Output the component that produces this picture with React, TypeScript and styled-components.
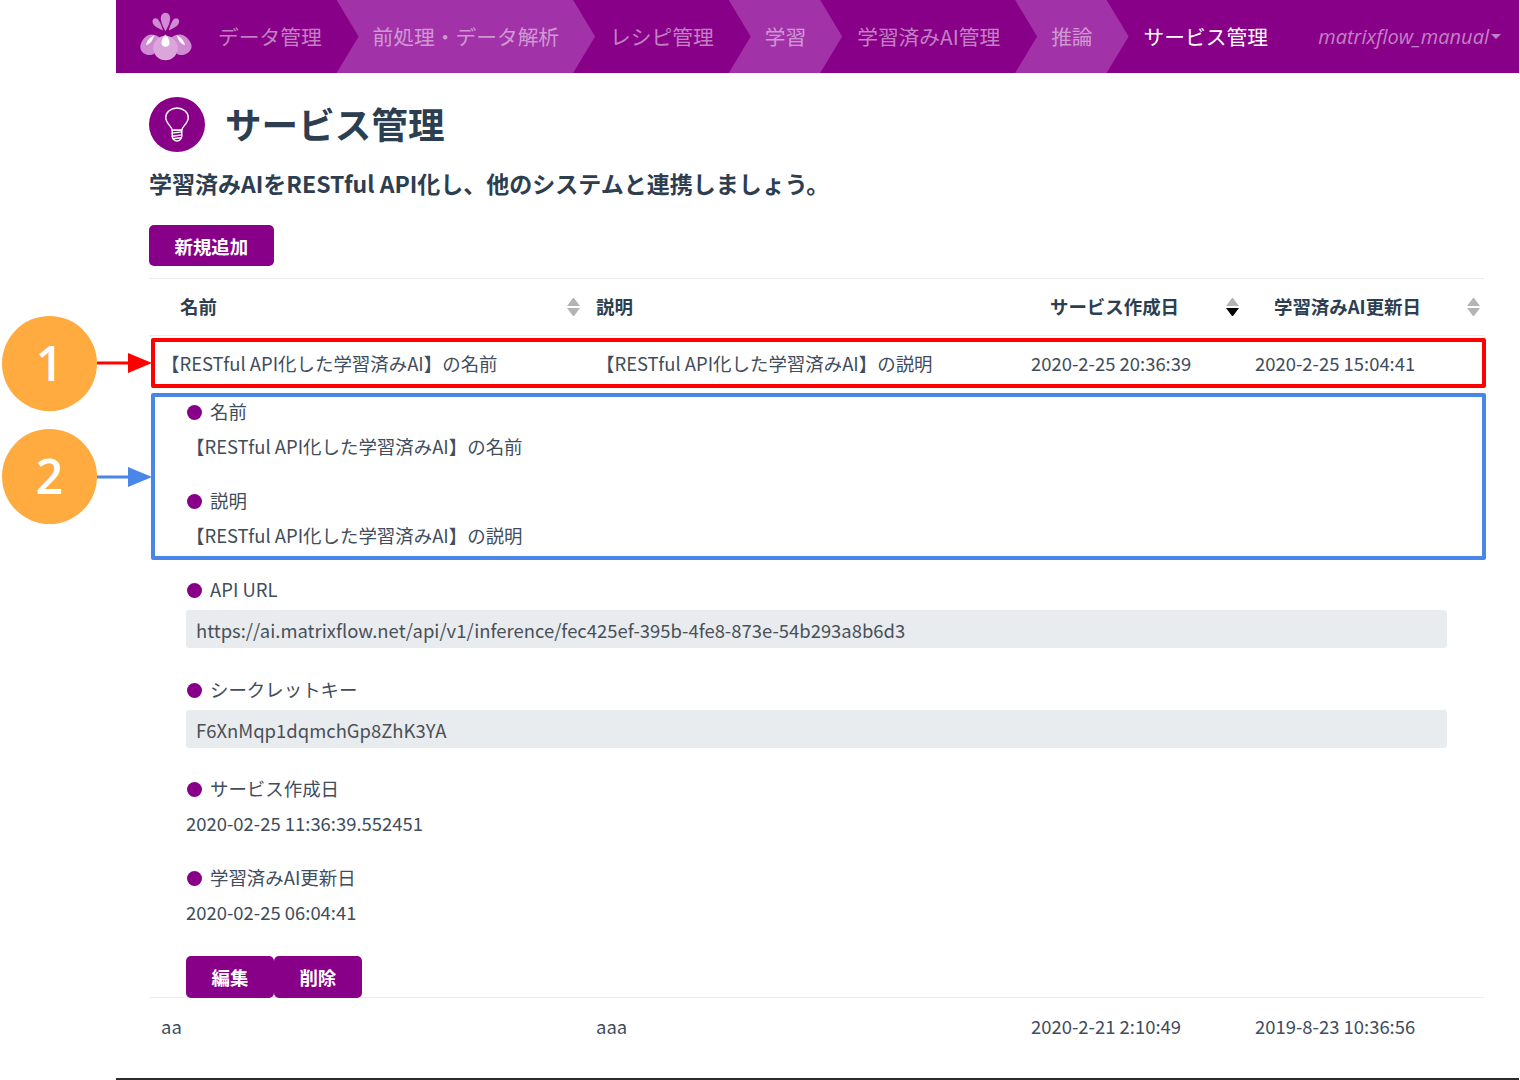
import styled, { createGlobalStyle } from "styled-components";

const GlobalStyle = createGlobalStyle`
  html, body {
    margin: 0;
    padding: 0;
    background: #fff;
  }
  body {
    font-family: "Noto Sans CJK JP", "Noto Sans", sans-serif;
    font-size: 18.45px;
    line-height: 27px;
    color: #3f4d5c;
  }
  * {
    box-sizing: border-box;
  }
`;

const PURPLE = "#880088";
const COLUMNS = "435px 435px 224px 241px";

const Page = styled.div`
  position: relative;
  width: 1520px;
  height: 1080px;
  overflow: hidden;
  padding: 0 1px 0 116px;
`;

const Main = styled.main`
  height: 1080px;
  border-bottom: 2px solid #2b2b2b;
`;

const Header = styled.header`
  display: flex;
  align-items: center;
  height: 73px;
  padding-left: 21px;
  background: ${PURPLE};
`;

const Brand = styled.svg`
  width: 57px;
  height: 53px;
  margin-right: 9px;
  flex: none;
`;

const NavItem = styled.a<{ $band?: boolean; $active?: boolean }>`
  display: flex;
  align-items: center;
  height: 73px;
  margin-left: -21px;
  padding: 0 36px;
  font-size: 20.72px;
  white-space: nowrap;
  color: ${(p) => (p.$active ? "#fff" : "rgba(255, 255, 255, 0.5)")};
  background: ${(p) => (p.$band ? "#a232a8" : "transparent")};
  clip-path: polygon(0 0, calc(100% - 22px) 0, 100% 50%, calc(100% - 22px) 100%, 0 100%, 22px 50%);
`;

const UserMenu = styled.div`
  display: flex;
  align-items: center;
  margin-left: auto;
  padding-right: 18px;
  font-family: "Open Sans", sans-serif;
  font-size: 20px;
  font-style: italic;
  color: rgba(255, 255, 255, 0.5);

  &::after {
    content: "";
    margin-left: 2px;
    border-top: 5px solid rgba(255, 255, 255, 0.5);
    border-left: 5px solid transparent;
    border-right: 5px solid transparent;
  }
`;

const Content = styled.div`
  padding: 24px 35px 0 33px;
`;

const TitleRow = styled.div`
  display: flex;
  align-items: center;
  gap: 21px;
  height: 55px;
`;

const TitleIcon = styled.div`
  display: flex;
  align-items: center;
  justify-content: center;
  width: 56px;
  height: 55px;
  border-radius: 50%;
  background: ${PURPLE};
`;

const Title = styled.h1`
  margin: 0 0 2px -1px;
  font-size: 36.6px;
  font-weight: 700;
  line-height: 53px;
  color: #2c3e50;
`;

const Lead = styled.p`
  margin: 14px 0 25px;
  font-size: 23px;
  font-weight: 700;
  line-height: 34px;
  color: #2c3e50;
`;

const Button = styled.button`
  height: 42px;
  padding: 1px 25.5px 0;
  border: 0;
  border-radius: 5px;
  font: inherit;
  font-weight: 700;
  color: #fff;
  background: ${PURPLE};
`;

const AddButton = styled(Button)`
  display: block;
  height: 41px;
  margin-bottom: 12px;
`;

const HeadRow = styled.div`
  display: grid;
  grid-template-columns: ${COLUMNS};
  height: 58px;
  padding-bottom: 1px;
  border-top: 1px solid #ececec;
  border-bottom: 1px solid #ececec;
`;

const HeadCell = styled.div<{ $plain?: boolean }>`
  display: flex;
  align-items: center;
  justify-content: space-between;
  padding: 0 4px 0 ${(p) => (p.$plain ? "12px" : "31px")};
  font-weight: 700;
  color: #2c3e50;
`;

const SortIcon = styled.span<{ $down?: boolean }>`
  display: flex;
  flex-direction: column;
  gap: 2px;
  width: 13px;

  &::before,
  &::after {
    content: "";
    border-left: 6.5px solid transparent;
    border-right: 6.5px solid transparent;
  }
  &::before {
    border-bottom: 8px solid #b4b4b4;
  }
  &::after {
    border-top: 8px solid ${(p) => (p.$down ? "#000" : "#b4b4b4")};
  }
`;

const DataRow = styled.div`
  display: grid;
  grid-template-columns: ${COLUMNS};
  align-items: center;
  height: 56px;
  padding-bottom: 2px;
`;

const LastRow = styled(DataRow)`
  height: 60px;
  border-top: 1px solid #ececec;
  margin-top: -1px;
`;

const Cell = styled.div`
  padding-left: 12px;
`;

const Detail = styled.section`
  padding: 6px 37px 0;
`;

const Field = styled.div`
  margin-bottom: 27px;
`;

const Label = styled.div`
  display: flex;
  align-items: center;
  gap: 8px;
  margin-bottom: 8px;

  &::before {
    content: "";
    width: 15px;
    height: 15px;
    margin: 1px 0 0 1px;
    border-radius: 50%;
    background: ${PURPLE};
  }
`;

const ReadOnlyValue = styled.div<{ $after: number }>`
  height: 38px;
  margin: -1px 0 ${(p) => p.$after}px;
  padding: 0 10px;
  line-height: 40px;
  border-radius: 3px;
  color: #495057;
  background: #e9ecef;
`;

const Actions = styled.div`
  position: relative;
  display: flex;
  margin-top: 30px;
`;

const Circle = styled.div<{ $top: number }>`
  position: absolute;
  left: 2px;
  top: ${(p) => p.$top}px;
  display: flex;
  align-items: center;
  justify-content: center;
  width: 95px;
  height: 95px;
  padding-bottom: 3px;
  border-radius: 50%;
  font-family: "Open Sans", sans-serif;
  font-size: 48px;
  font-weight: 600;
  color: #fff;
  background: #ffab40;
`;

const Arrow = styled.svg<{ $top: number }>`
  position: absolute;
  left: 97px;
  top: ${(p) => p.$top}px;
  width: 55px;
  height: 20px;
`;

const Callout = styled.div<{ $top: number; $height: number; $color: string }>`
  position: absolute;
  left: 151px;
  top: ${(p) => p.$top}px;
  width: 1335px;
  height: ${(p) => p.$height}px;
  border: 4px solid ${(p) => p.$color};
  border-radius: 2px;
`;

const navItems = [
  { label: "データ管理" },
  { label: "前処理・データ解析", band: true },
  { label: "レシピ管理" },
  { label: "学習", band: true },
  { label: "学習済みAI管理" },
  { label: "推論", band: true },
  { label: "サービス管理", active: true },
];

const NAME = "【RESTful API化した学習済みAI】の名前";
const DESCRIPTION = "【RESTful API化した学習済みAI】の説明";

const Logo = () => (
  <Brand viewBox="20 30 170 160">
    <g fill="#cf8ad2">
      <path d="M105 38c10 0 15 10 14 20-1 13-8 26-14 36-6-10-13-23-14-36-1-10 4-20 14-20z" />
      <path d="M66 62c3-10 14-9 19 0 5 8 10 20 12 30-12-6-34-14-31-30z" />
      <path d="M146 62c-3-10-14-9-19 0-5 8-10 20-12 30 12-6 34-14 31-30z" />
      <path d="M62 104c15 0 27 10 31 14-14 8-21 24-22 44-6 4-16 6-24 2-14-4-21-18-17-30 5-16 18-30 32-30z" />
      <path d="M148 104c-15 0-27 10-31 14 14 8 21 24 22 44 6 4 16 6 24 2 14-4 24-18 20-30-5-16-21-30-35-30z" />
    </g>
    <circle cx="105" cy="145" r="37" fill="#dba6dc" />
    <g fill="#fff">
      <path d="M105 104c8 8 13 18 12 28-2 12-22 12-24 0-1-10 4-20 12-28z" />
      <path d="M72 106c-12 4-23 16-26 30 8-2 12-5 16-10 3-5 6-12 10-20z" />
      <path d="M138 106c12 4 23 16 26 30-8-2-12-5-16-10-3-5-6-12-10-20z" />
    </g>
  </Brand>
);

const BulbIcon = () => (
  <svg width="26" height="35" viewBox="0 0 30 40" fill="none" stroke="#fff" strokeWidth="1.6" strokeLinecap="round">
    <path d="M9.5 26.5c0-4-7.5-7.5-7.5-14.5C2 5.8 8 1 15 1s13 4.8 13 11c0 7-7.5 10.5-7.500 14.500z" />
    <path d="M9.5 26.5h11v7c0 3-2.500 5.500-5.500 5.500s-5.500-2.500-5.500-5.500z" />
    <path d="M9.5 30l11-1.500M9.500 33.500l11-1.500M10.500 36.500l8.500-1.200" />
  </svg>
);

const Annotations = () => (
  <>
    <Circle $top={316}>1</Circle>
    <Arrow $top={353} viewBox="0 0 55 20">
      <path d="M0 8.500h31V0l24 10-24 10v-8.500H0z" fill="#ff0000" />
    </Arrow>
    <Callout $top={338} $height={50} $color="#ff0000" />
    <Circle $top={429}>2</Circle>
    <Arrow $top={467} viewBox="0 0 55 20">
      <path d="M0 8.500h31V0l24 10-24 10v-8.500H0z" fill="#4a86e8" />
    </Arrow>
    <Callout $top={393} $height={167} $color="#4a86e8" />
  </>
);

const App = () => {
  return (
    <Page>
      <GlobalStyle />
      <Main>
        <Header>
          <Logo />
          {navItems.map((item) => (
            <NavItem key={item.label} $band={item.band} $active={item.active}>
              {item.label}
            </NavItem>
          ))}
          <UserMenu>matrixflow_manual</UserMenu>
        </Header>

        <Content>
          <TitleRow>
            <TitleIcon>
              <BulbIcon />
            </TitleIcon>
            <Title>サービス管理</Title>
          </TitleRow>
          <Lead>学習済みAIをRESTful API化し、他のシステムと連携しましょう。</Lead>
          <AddButton>新規追加</AddButton>

          <HeadRow>
            <HeadCell>
              名前
              <SortIcon />
            </HeadCell>
            <HeadCell $plain>説明</HeadCell>
            <HeadCell>
              サービス作成日
              <SortIcon $down />
            </HeadCell>
            <HeadCell>
              学習済みAI更新日
              <SortIcon />
            </HeadCell>
          </HeadRow>

          <DataRow>
            <Cell>{NAME}</Cell>
            <Cell>{DESCRIPTION}</Cell>
            <Cell>2020-2-25 20:36:39</Cell>
            <Cell>2020-2-25 15:04:41</Cell>
          </DataRow>

          <Detail>
            <Field>
              <Label>名前</Label>
              {NAME}
            </Field>
            <Field>
              <Label>説明</Label>
              {DESCRIPTION}
            </Field>
            <Label>API URL</Label>
            <ReadOnlyValue $after={28}>https://ai.matrixflow.net/api/v1/inference/fec425ef-395b-4fe8-873e-54b293a8b6d3</ReadOnlyValue>
            <Label>シークレットキー</Label>
            <ReadOnlyValue $after={27}>F6XnMqp1dqmchGp8ZhK3YA</ReadOnlyValue>
            <Field>
              <Label>サービス作成日</Label>
              2020-02-25 11:36:39.552451
            </Field>
            <Field>
              <Label>学習済みAI更新日</Label>
              2020-02-25 06:04:41
            </Field>
            <Actions>
              <Button>編集</Button>
              <Button>削除</Button>
            </Actions>
          </Detail>

          <LastRow>
            <Cell>aa</Cell>
            <Cell>aaa</Cell>
            <Cell>2020-2-21 2:10:49</Cell>
            <Cell>2019-8-23 10:36:56</Cell>
          </LastRow>
        </Content>
      </Main>
      <Annotations />
    </Page>
  );
};

export default App;
